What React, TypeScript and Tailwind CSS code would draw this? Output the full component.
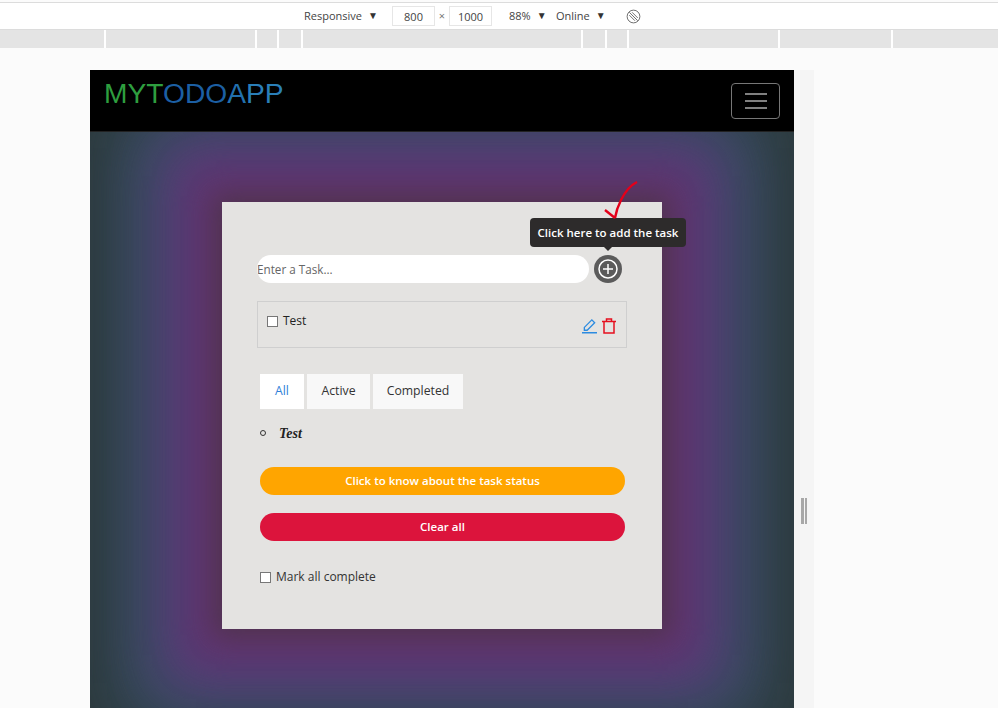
import React from 'react';

const ui = { fontFamily: '"Open Sans", "Noto Sans", sans-serif' };

function Caret() {
  return <span className="text-[10px] ml-1.5 relative -top-px text-[#333]">▼</span>;
}

function Ruler() {
  const ticks = [106, 257, 279, 303, 583, 607, 629, 780, 893];
  return (
    <div className="h-[18px] bg-[#e4e4e4] flex">
      {ticks.map((t, i) => (
        <div key={t} className="h-full border-r-2 border-white" style={{ width: t - (i ? ticks[i - 1] : 0) }} />
      ))}
    </div>
  );
}

export default function App() {
  return (
    <div className="w-[998px] h-[708px] overflow-hidden bg-[#fbfbfb] flex flex-col" style={ui}>
      <div className="h-[28px] mt-0.5 bg-white border-y border-[#dcdcdc] flex items-center pl-[304px] text-[11px] text-[#444]">
        <span className="w-[74px]">Responsive<Caret /></span>
        <input readOnly value="800" className="ml-[14px] w-[43px] h-[20px] border border-[#e6e6e6] text-center text-[11px] outline-none" />
        <span className="w-[14px] text-center text-[#777]">×</span>
        <input readOnly value="1000" className="w-[43px] h-[20px] border border-[#e6e6e6] text-center text-[11px] outline-none" />
        <span className="ml-[17px] w-[47px]">88%<Caret /></span>
        <span className="w-[56px]">Online<Caret /></span>
        <svg viewBox="0 0 16 16" className="ml-[14px] w-[15px] h-[15px] text-[#666]" fill="none" stroke="currentColor" strokeWidth="1">
          <circle cx="8" cy="8" r="6.8" />
          <path d="M3.5 3.5l9 9M3.5 6.5l6 6M6.5 3.5l6 6" />
        </svg>
      </div>
      <Ruler />
      <div className="flex-1 flex pl-[90px] pt-[22px] min-h-0">
        <div className="w-[704px] h-[700px] shrink-0 flex flex-col overflow-hidden">
          <nav className="h-[62px] bg-black flex justify-between shrink-0 border-b border-[#222]">
            <div className="pl-[14px] pt-[4px] text-[28.2px] leading-[38px]" style={{ fontFamily: '"Liberation Sans", sans-serif' }}>
              <span className="text-[#2e9e3f]">MYT</span>
              <span className="text-[#1c5fa3]">ODO</span>
              <span className="text-[#2270ae]">A</span>
              <span className="text-[#2a7fb8]">PP</span>
            </div>
            <button className="mt-[13px] mr-[14px] w-[49px] h-[36px] border border-[#777] rounded flex items-center justify-center">
              <svg viewBox="0 0 22 16" className="w-[22px] h-[16px]" fill="none" stroke="#aaa" strokeWidth="1.3">
                <path d="M0 1h22M0 8h22M0 15h22" />
              </svg>
            </button>
          </nav>
          <main className="flex-1 bg-[#2d393b] overflow-hidden pt-[70px] pl-[132px]">
            <div className="relative w-[440px] h-[427px] bg-[#e4e3e1] shadow-[0_0_24px_6px_#4f344e,0_0_36px_26px_#60346a,0_0_50px_54px_#5a3a78,0_0_70px_76px_#44486e,0_0_70px_98px_#33505c]">
              <div className="absolute left-[308px] top-[16px] w-[156px] h-[29px] rounded-sm bg-[#2d2b2b] text-white text-[11.5px] font-semibold flex items-center justify-center z-10">
                Click here to add the task
              </div>
              <div className="absolute left-[382px] top-[45px] w-0 h-0 border-x-4 border-x-transparent border-t-4 border-t-[#2d2b2b]" />
              <svg viewBox="0 0 40 46" className="absolute left-[381px] top-[-22px] w-[40px] h-[46px] z-20" fill="none" stroke="#e4001a" strokeWidth="2.4">
                <path d="M34 2C28 5 22 12 18 20C15 26 13 32 12 38M2 30L12 38" />
              </svg>
              <div className="pt-[53px] pl-[35px] pr-[35px] flex items-center gap-[5px]">
                <input readOnly placeholder="Enter a Task..." className="w-[332px] h-[28px] rounded-full bg-white text-[11.7px] text-[#555] placeholder:text-[#666] outline-none" />
                <button className="w-[28px] h-[28px] rounded-full bg-[#5b5b5b] flex items-center justify-center">
                  <svg viewBox="0 0 20 20" className="w-[20px] h-[20px]" fill="none" stroke="white" strokeWidth="1.5">
                    <circle cx="10" cy="10" r="9" />
                    <path d="M10 5v10M5 10h10" />
                  </svg>
                </button>
              </div>
              <div className="mt-[18px] ml-[35px] w-[370px] h-[47px] border border-[#cfcfcf] flex justify-between pl-[9px] pr-[10px]">
                <label className="flex items-center gap-[5px] h-[38px] text-[12px] text-[#222]">
                  <span className="w-[11px] h-[11px] border border-[#777] bg-white" />Test
                </label>
                <div className="flex items-center gap-[5px] pt-[3px]">
                  <svg viewBox="0 0 16 16" className="w-[15px] h-[16px]" fill="none" stroke="#2b8be0" strokeWidth="1.4">
                    <path d="M2.5 12.5v-3L10.5 1.5l3 3-8 8z" />
                    <path d="M0 15.2h16" strokeWidth="1.6" />
                  </svg>
                  <svg viewBox="0 0 14 16" className="w-[14px] h-[16px]" fill="none" stroke="#e5101f" strokeWidth="1.5">
                    <path d="M0 3.5h14M4.5 3.5V1h5v2.5M2 3.5V15h10V3.5" />
                  </svg>
                </div>
              </div>
              <div className="mt-[26px] ml-[38px] flex gap-[3px] text-[12.25px]">
                <div className="w-[44px] h-[35px] bg-white text-[#2f7fd8] flex items-center justify-center">All</div>
                <div className="w-[63px] h-[35px] bg-[#f8f8f8] text-[#333] flex items-center justify-center">Active</div>
                <div className="w-[90px] h-[35px] bg-[#f8f8f8] text-[#333] flex items-center justify-center">Completed</div>
              </div>
              <div className="mt-[15px] ml-[38px] flex items-center h-[18px]">
                <span className="w-[6px] h-[6px] rounded-full border border-[#333]" />
                <span className="ml-[13px] text-[14px] font-bold italic text-[#222]" style={{ fontFamily: '"Liberation Serif", serif' }}>Test</span>
              </div>
              <button className="block mt-[25px] ml-[38px] w-[365px] h-[28px] rounded-full bg-[#ffa500] text-white text-[11.5px] font-semibold">Click to know about the task status</button>
              <button className="block mt-[18px] ml-[38px] w-[365px] h-[28px] rounded-full bg-[#dc143c] text-white text-[11.5px] font-semibold">Clear all</button>
              <label className="mt-[28px] ml-[38px] flex items-center gap-[5px] text-xs text-[#333]">
                <span className="w-[11px] h-[11px] border border-[#777] bg-white" />Mark all complete
              </label>
            </div>
          </main>
        </div>
        <div className="w-[20px] h-[700px] bg-[#f5f5f5] relative">
          <div className="absolute left-[7px] top-[428px] w-[3px] h-[26px] bg-[#a8a8a8]" />
          <div className="absolute left-[11px] top-[428px] w-[2px] h-[26px] bg-[#a8a8a8]" />
        </div>
      </div>
    </div>
  );
}
